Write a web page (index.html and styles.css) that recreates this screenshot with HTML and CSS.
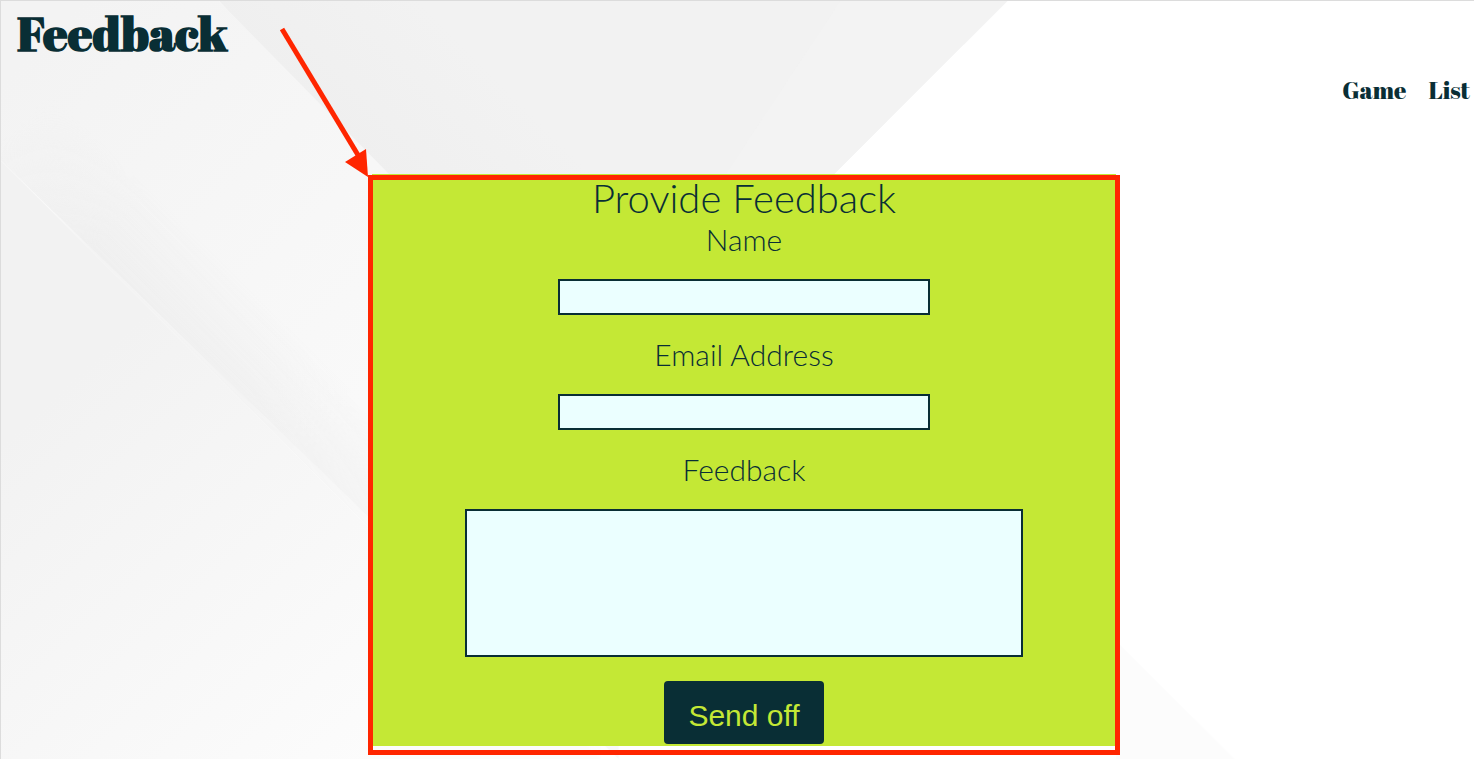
FILE: index.html
```html
<!DOCTYPE html>
<html lang="en">
<head>
<meta charset="utf-8">
<meta name="viewport" content="width=device-width, initial-scale=1">
<title>Feedback</title>
<link rel="stylesheet" href="styles.css">
</head>
<body class="page">
<svg class="backdrop" viewBox="0 0 1474 759" preserveAspectRatio="none" aria-hidden="true">
  <defs>
    <linearGradient id="upper" gradientUnits="userSpaceOnUse" x1="290" y1="90" x2="400" y2="-20">
      <stop offset="0" stop-color="#efefef"/><stop offset="1" stop-color="#f2f2f2"/>
    </linearGradient>
    <linearGradient id="middle" gradientUnits="userSpaceOnUse" x1="60" y1="20" x2="400" y2="360">
      <stop offset="0" stop-color="#f3f3f3"/><stop offset="1" stop-color="#f9f9f9"/>
    </linearGradient>
    <linearGradient id="shade" gradientUnits="userSpaceOnUse" x1="130" y1="290" x2="190" y2="230">
      <stop offset="0" stop-color="#ebebeb"/><stop offset="1" stop-color="#ebebeb" stop-opacity="0"/>
    </linearGradient>
    <linearGradient id="fade" gradientUnits="userSpaceOnUse" x1="0" y1="140" x2="500" y2="640">
      <stop offset="0" stop-color="#fff" stop-opacity="0"/>
      <stop offset=".2" stop-color="#fff" stop-opacity=".6"/>
      <stop offset=".5" stop-color="#fff" stop-opacity=".6"/>
      <stop offset="1" stop-color="#fff" stop-opacity=".1"/>
    </linearGradient>
    <mask id="shadeFade"><rect width="1474" height="759" fill="url(#fade)"/></mask>
    <linearGradient id="lower" gradientUnits="userSpaceOnUse" x1="70" y1="380" x2="400" y2="740">
      <stop offset="0" stop-color="#f2f2f2"/><stop offset="1" stop-color="#fcfcfc"/>
    </linearGradient>
  </defs>
  <path fill="#fff" d="M0 0h1474v759H0z"/>
  <path fill="url(#upper)" d="M218 0h789L833 174 600 407z"/>
  <path fill="#f4f4f4" fill-opacity=".7" d="M840 0h167L833 174H725z"/>
  <path fill="url(#middle)" d="M0 0h218l400 407v352L0 160z"/>
  <path fill="url(#shade)" mask="url(#shadeFade)" d="M0 160V0l600 600v159z"/>
  <path fill="url(#lower)" d="M0 160l600 599H0z"/>
  <path fill="#fcfcfc" d="M1116 641l118 118h-118z"/>
</svg>

<header class="header">
  <h1 class="title">Feedback</h1>
  <nav class="nav" aria-label="Main">
    <a class="nav-link" href="#game">Game</a>
    <a class="nav-link" href="#list">List</a>
  </nav>
</header>

<main class="main">
  <form class="form">
    <h2 class="form-title">Provide Feedback</h2>
    <label class="label" for="name">Name</label>
    <input class="field" id="name" name="name" type="text">
    <label class="label" for="email">Email Address</label>
    <input class="field" id="email" name="email" type="email">
    <label class="label" for="message">Feedback</label>
    <textarea class="field field-large" id="message" name="message"></textarea>
    <button class="send" type="submit">Send off</button>
    <div class="frame"></div>
    <svg class="arrow" viewBox="0 0 94 156" aria-hidden="true">
      <path d="M5 7L84 138" fill="none" stroke="#ff2600" stroke-width="5"/>
      <path d="M91 155L68 140 89 127z" fill="#ff2600"/>
    </svg>
  </form>
</main>
</body>
</html>
```
FILE: styles.css
```css
* {
  box-sizing: border-box;
}

.page {
  position: relative;
  min-height: 100vh;
  margin: 0;
  border-top: 1px solid #dcdcdc;
  border-left: 1px solid #dcdcdc;
  color: #092e35;
  font-family: Lato, sans-serif;
  overflow-x: hidden;
}

.backdrop {
  position: absolute;
  inset: 0;
  z-index: -1;
  width: 100%;
  height: 100%;
}

.header {
  padding: 2px 4px 69px 16px;
  font-family: "Abril Fatface", "Liberation Serif", serif;
}

.title {
  margin: 0;
  font-size: 48px;
  font-weight: 700;
  line-height: 60px;
}

.nav {
  display: flex;
  justify-content: flex-end;
  gap: 22px;
  padding-top: 12px;
}

.nav-link {
  color: inherit;
  font-size: 24px;
  font-weight: 400;
  line-height: 30px;
  text-decoration: none;
}

.main {
  padding-left: 13px;
}

.form {
  position: relative;
  display: flex;
  flex-direction: column;
  align-items: center;
  width: 51%;
  margin: 0 auto;
  padding-bottom: 2px;
  background: #c4e835;
}

.form-title {
  margin: 0;
  font-size: 40px;
  font-weight: 300;
  line-height: 48px;
}

.label {
  font-size: 30px;
  font-weight: 300;
  line-height: 34px;
}

.field {
  width: 50%;
  height: 36px;
  margin: 23px 0 22px;
  padding: 4px 8px;
  border: 2px solid #092e35;
  border-radius: 0;
  background: #ebffff;
  color: inherit;
  font: 20px Lato, sans-serif;
}

.field-large {
  width: 75%;
  height: 148px;
  margin-bottom: 24px;
  resize: none;
}

.send {
  padding: 17px 24px 11px;
  border: 0;
  border-radius: 4px;
  background: #092e35;
  color: #c4e835;
  font: 30px/35px "Liberation Sans", Arial, sans-serif;
}

.frame {
  position: absolute;
  inset: 1px -4px -9px;
  border: 5px solid #ff2600;
  pointer-events: none;
}

.arrow {
  position: absolute;
  top: -152px;
  left: -95px;
  width: 94px;
  height: 156px;
  pointer-events: none;
}
```
